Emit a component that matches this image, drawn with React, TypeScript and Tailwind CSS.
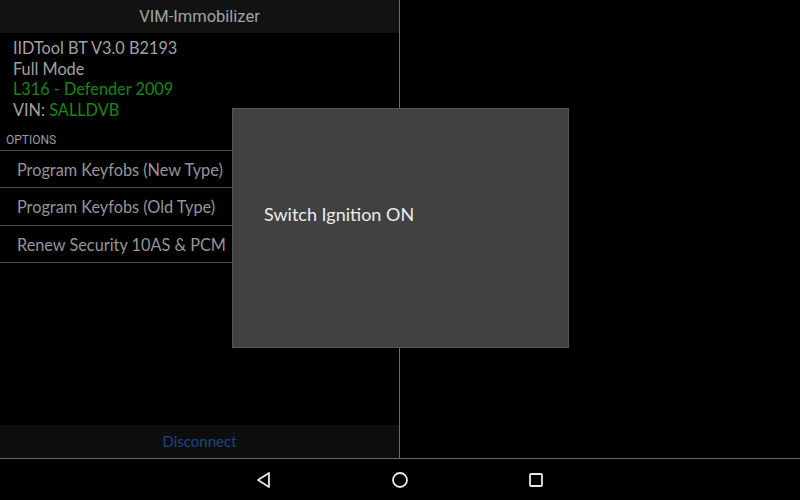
const font = { fontFamily: 'Lato, "Open Sans", sans-serif' };

const options = ['Program Keyfobs (New Type)', 'Program Keyfobs (Old Type)', 'Renew Security 10AS & PCM'];

export default function App() {
  return (
    <div className="relative flex h-[500px] w-[800px] flex-col overflow-hidden bg-black" style={font}>
      <div className="flex h-[459px] border-b border-[#6a6a6a]">
        {/* left pane */}
        <div className="flex w-[400px] flex-col border-r border-[#6a6a6a]">
          <div
            className="flex h-[33px] items-center justify-center bg-[#121212] pt-[2px] text-[16.5px] text-[#a3a3a3]"
            style={{ fontFamily: 'Roboto, sans-serif' }}
          >
            VIM-Immobilizer
          </div>
          <div className="px-[13px] pt-[5px] text-[16.3px] leading-[20.7px] text-[#a0a0a0]">
            <div>IIDTool BT V3.0 B2193</div>
            <div>Full Mode</div>
            <div className="text-[#178817]">L316 - Defender 2009</div>
            <div>
              VIN: <span className="text-[#178817]">SALLDVB</span>
            </div>
          </div>
          <div
            className="mt-[9px] flex h-[21px] items-center border-b border-[#4a4a4a] pl-[6px] text-[12px] text-[#9c9c9c]"
            style={{ fontFamily: 'Roboto, sans-serif' }}
          >
            OPTIONS
          </div>
          {options.map((o, i) => (
            <div
              key={o}
              className={`flex items-center border-b border-[#4a4a4a] pl-[17px] pt-[2px] text-[16.3px] text-[#959595] ${i === 1 ? 'h-[38px]' : 'h-[37px]'}`}
            >
              {o}
            </div>
          ))}
          <div className="flex-1" />
          <div className="flex h-[33px] items-center justify-center bg-[#0e0e0e] text-[15px] text-[#1a4680]">
            Disconnect
          </div>
        </div>
        <div className="flex-1" />
      </div>

      {/* nav bar */}
      <div className="flex flex-1 items-center justify-center gap-[118px]">
        <svg width="18" height="18" viewBox="0 0 18 18">
          <path d="M14 2 L3 9 L14 16 Z" fill="none" stroke="#e6e6e6" strokeWidth="1.8" strokeLinejoin="round" />
        </svg>
        <svg width="18" height="18" viewBox="0 0 18 18">
          <circle cx="9" cy="9" r="7" fill="none" stroke="#e6e6e6" strokeWidth="1.8" />
        </svg>
        <svg width="18" height="18" viewBox="0 0 18 18">
          <rect x="3" y="3" width="12" height="12" rx="1" fill="none" stroke="#e6e6e6" strokeWidth="1.8" />
        </svg>
      </div>

      {/* dialog */}
      <div className="absolute left-[232px] top-[108px] flex h-[240px] w-[337px] items-center border border-[#555] bg-[#414141] pb-[28px] pl-[31px] text-[18px] text-[#ececec]">
        Switch Ignition ON
      </div>
    </div>
  );
}
